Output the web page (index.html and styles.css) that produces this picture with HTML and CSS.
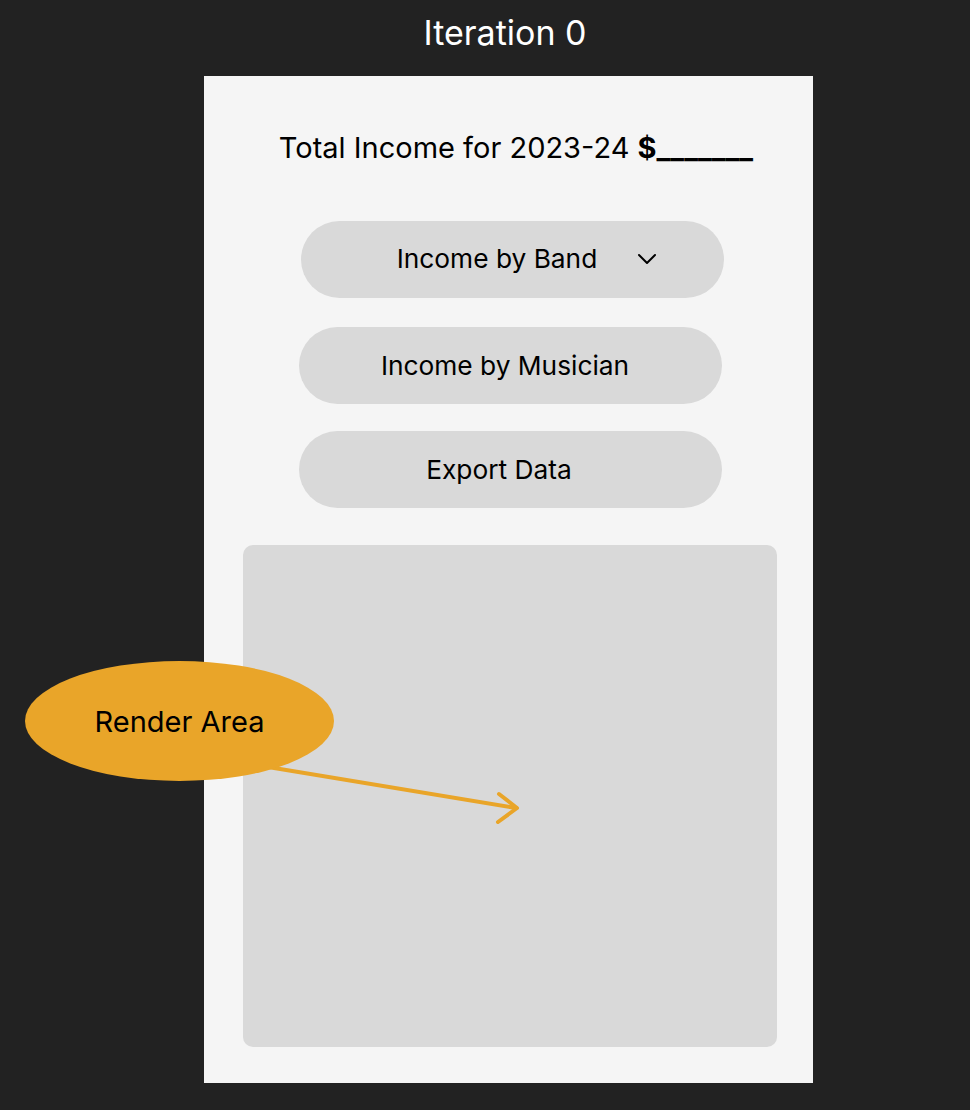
FILE: index.html
```html
<!DOCTYPE html>
<html lang="en">
<head>
  <meta charset="UTF-8">
  <meta name="viewport" content="width=device-width, initial-scale=1.0">
  <title>Iteration 0</title>
  <link rel="stylesheet" href="styles.css">
</head>
<body>
  <main class="board">
    <h1 class="board-title">Iteration 0</h1>

    <section class="frame">
      <p class="total">Total Income for 2023-24 <strong>$_______</strong></p>

      <div class="actions">
        <button class="pill pill-select" type="button">
          <span>Income by Band</span>
          <svg class="chevron" width="20" height="12" viewBox="0 0 20 12" aria-hidden="true">
            <polyline points="2,2 10,10 18,2" fill="none" stroke="#000" stroke-width="2" stroke-linecap="round" stroke-linejoin="round"/>
          </svg>
        </button>
        <button class="pill pill-musician" type="button">Income by Musician</button>
        <button class="pill pill-export" type="button">Export Data</button>
      </div>

      <div class="render-area"></div>
    </section>

    <!-- annotation -->
    <svg class="note-arrow" width="290" height="90" viewBox="250 750 290 90" aria-hidden="true">
      <line x1="262" y1="766" x2="516" y2="808" stroke="#e9a529" stroke-width="4" stroke-linecap="round"/>
      <polyline points="499,794 517,808 498,822" fill="none" stroke="#e9a529" stroke-width="4" stroke-linecap="round" stroke-linejoin="round"/>
    </svg>
    <div class="note">Render Area</div>
  </main>
</body>
</html>
```

FILE: styles.css
```css
* {
  margin: 0;
  padding: 0;
  box-sizing: border-box;
}

body {
  background: #222222;
  font-family: Inter, 'Noto Sans', sans-serif;
  color: #000;
}

.board {
  position: relative;
  width: 970px;
  height: 1110px;
  padding-top: 13px;
}

.board-title {
  font-size: 34px;
  font-weight: 400;
  line-height: 40px;
  color: #fff;
  text-align: center;
  padding-left: 40px;
  margin-bottom: 23px;
}

.frame {
  width: 609px;
  height: 1007px;
  margin-left: 204px;
  background: #f5f5f5;
  padding: 55px 36px 36px 39px;
  display: flex;
  flex-direction: column;
}

.total {
  font-size: 29px;
  line-height: 34px;
  text-align: center;
  padding-left: 12px;
  margin-bottom: 56px;
  white-space: nowrap;
}

.total strong {
  font-weight: 700;
}

.actions {
  display: flex;
  flex-direction: column;
  align-items: center;
  margin-bottom: 37px;
}

.pill {
  width: 423px;
  height: 77px;
  border: none;
  border-radius: 39px;
  background: #d9d9d9;
  font-family: inherit;
  font-size: 26.3px;
  color: #000;
  display: flex;
  align-items: center;
  justify-content: center;
}

.pill-select {
  margin-left: 4px;
  padding-left: 30px;
  padding-bottom: 2px;
  gap: 40px;
}

.pill-musician {
  margin-top: 29px;
  padding-right: 10px;
}

.pill-export {
  margin-top: 27px;
  padding-right: 22px;
}

.chevron {
  display: block;
}

.render-area {
  flex: 1;
  background: #d9d9d9;
  border-radius: 10px;
}

.note {
  position: absolute;
  left: 25px;
  top: 661px;
  width: 309px;
  height: 120px;
  border-radius: 50%;
  background: #e9a529;
  font-size: 29px;
  display: flex;
  align-items: center;
  justify-content: center;
}

.note-arrow {
  position: absolute;
  left: 250px;
  top: 750px;
}
```
